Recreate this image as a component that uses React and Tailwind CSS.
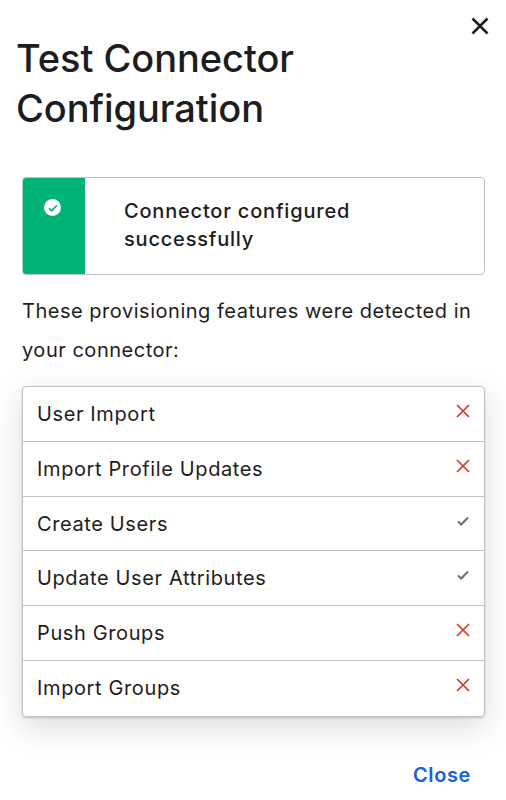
import React from 'react';

const features = [
  { name: 'User Import', ok: false },
  { name: 'Import Profile Updates', ok: false },
  { name: 'Create Users', ok: true },
  { name: 'Update User Attributes', ok: true },
  { name: 'Push Groups', ok: false },
  { name: 'Import Groups', ok: false },
];

const CrossIcon = ({ className, width = 2 }) => (
  <svg viewBox="0 0 16 16" fill="none" stroke="currentColor" strokeWidth={width} className={className}>
    <path d="M2 2l12 12M14 2L2 14" />
  </svg>
);

const CheckIcon = ({ className }) => (
  <svg viewBox="0 0 12 10" fill="none" stroke="currentColor" strokeWidth="2" className={className}>
    <path d="M1 5.5l3.2 3L11 1.5" />
  </svg>
);

export default function App() {
  return (
    <div className="w-[506px] h-[800px] bg-white overflow-hidden text-[#1d1d21] font-['Inter',sans-serif]">
      <div className="flex justify-end pt-[16px] pr-[16px]">
        <CrossIcon className="w-5 h-5 text-[#1d1d21]" />
      </div>
      <h1 className="mt-[-3px] px-[16px] text-[38px] leading-[50px] font-medium tracking-[-0.05px]">
        Test Connector
        <br />
        Configuration
      </h1>

      <div className="ml-[22px] mr-[21px] mt-[44px] h-[98px] flex rounded border border-[#c1c1c8] overflow-hidden">
        <div className="w-[63px] -my-px -ml-px bg-[#00b377] flex justify-center pt-[22px] shrink-0">
          <div className="w-[17px] h-[17px] -ml-[2px] rounded-full bg-white flex items-center justify-center">
            <CheckIcon className="w-[10px] h-[8px] text-[#00b377]" />
          </div>
        </div>
        <p className="pl-[39px] pt-[19px] text-[20px] leading-[28px] font-medium tracking-[0.8px]">
          Connector configured
          <br />
          successfully
        </p>
      </div>

      <p className="ml-[22px] mr-[21px] mt-[17px] text-[20px] leading-[39px] tracking-[0.52px]">
        These provisioning features were detected in your connector:
      </p>

      <ul className="ml-[22px] mr-[21px] mt-[16px] rounded border border-[#c1c1c8] divide-y divide-[#c1c1c8] shadow-[0_1px_2px_rgba(29,29,33,0.2),0_10px_30px_rgba(29,29,33,0.16)]">
        {features.map((f) => (
          <li key={f.name} className="h-[54.75px] flex justify-between pl-[14px] pr-[14px]">
            <span className="text-[20px] leading-[54px] tracking-[0.62px]">{f.name}</span>
            {f.ok ? (
              <CheckIcon className="w-[12px] h-[10px] mt-[19px] mr-[1px] text-[#6e6e78]" />
            ) : (
              <CrossIcon width={1.7} className="w-4 h-4 mt-[16px] -mr-[1px] text-[#da372c]" />
            )}
          </li>
        ))}
      </ul>

      <div className="flex justify-end pr-[35px] mt-[43.5px]">
        <button className="text-[20px] leading-[30px] font-semibold tracking-[0.6px] text-[#1662dd]">Close</button>
      </div>
    </div>
  );
}
